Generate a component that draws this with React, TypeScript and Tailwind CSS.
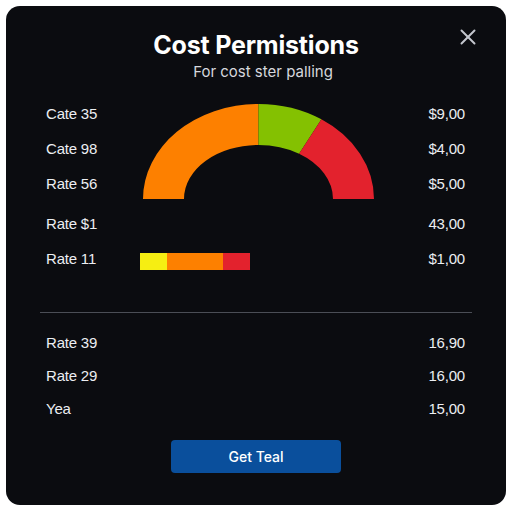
import { X } from "lucide-react";

const topRows = [
  { label: "Cate 35", value: "$9,00" },
  { label: "Cate 98", value: "$4,00" },
  { label: "Rate 56", value: "$5,00" },
  { label: "Rate $1", value: "43,00" },
  { label: "Rate 11", value: "$1,00" },
];

const bottomRows = [
  { label: "Rate 39", value: "16,90" },
  { label: "Rate 29", value: "16,00" },
  { label: "Yea", value: "15,00" },
];

// gauge geometry
const W = 231;
const H = 95;
const cx = W / 2;
const cy = H;
const R = { x: 115.5, y: 95 };
const r = { x: 74.5, y: 54 };

function pt(rad: { x: number; y: number }, deg: number) {
  const a = (deg * Math.PI) / 180;
  return `${(cx + rad.x * Math.cos(a)).toFixed(2)} ${(cy - rad.y * Math.sin(a)).toFixed(2)}`;
}

function segment(a1: number, a2: number) {
  return `M ${pt(R, a1)} A ${R.x} ${R.y} 0 0 1 ${pt(R, a2)} L ${pt(r, a2)} A ${r.x} ${r.y} 0 0 0 ${pt(r, a1)} Z`;
}

function Gauge() {
  return (
    <svg width={W} height={H} viewBox={`0 0 ${W} ${H}`} className="block">
      <path d={segment(180, 90)} fill="#fd8000" />
      <path d={segment(90, 57)} fill="#84c101" />
      <path d={segment(57, 0)} fill="#e3222d" />
    </svg>
  );
}

export default function App() {
  return (
    <div className="min-h-screen bg-white p-[6px] font-['Inter',sans-serif]">
      <div className="relative h-[499px] rounded-[14px] bg-[#0b0c10] text-[#eceef2]">
        <button className="absolute right-[25px] top-[18px] text-[#c4c7ce]">
          <X size={26} strokeWidth={1.8} />
        </button>

        <div className="pt-[24px] text-center">
          <h2 className="text-[25px] leading-[30px] font-bold text-white tracking-[-0.2px]">Cost Permistions</h2>
          <p className="mt-[3px] pl-[14px] text-[15px] leading-[18px] text-[#d6d8dd]">For cost ster palling</p>
        </div>

        <div className="mt-[16px] grid grid-cols-[1fr_231px_1fr] pl-[40px] pr-[41px] font-['Liberation_Sans',sans-serif] text-[15px] tracking-[-0.2px]">
          <div className="flex flex-col">
            {topRows.map((row, i) => (
              <div key={row.label} className={`flex h-[35px] items-center ${i === 3 ? "mt-[5px]" : ""}`}>
                {row.label}
              </div>
            ))}
          </div>

          <div className="flex flex-col pt-[7px] pl-[3px]">
            <Gauge />
            <div className="ml-[-3px] mt-[54px] flex h-[17px] w-[110px]">
              <div className="w-[27px] bg-[#f6ee12]" />
              <div className="w-[56px] bg-[#fd8000]" />
              <div className="w-[27px] bg-[#e3222d]" />
            </div>
          </div>

          <div className="flex flex-col items-end">
            {topRows.map((row, i) => (
              <div key={row.label} className={`flex h-[35px] items-center ${i === 3 ? "mt-[5px]" : ""}`}>
                {row.value}
              </div>
            ))}
          </div>
        </div>

        <div className="mx-[34px] mt-[35px] h-px bg-[#4b4e56]" />

        <div className="mt-[14px] flex flex-col pl-[40px] pr-[41px] font-['Liberation_Sans',sans-serif] text-[15px] tracking-[-0.2px]">
          {bottomRows.map((row) => (
            <div key={row.label} className="flex h-[33px] items-center justify-between">
              <span>{row.label}</span>
              <span>{row.value}</span>
            </div>
          ))}
        </div>

        <div className="mt-[14px] flex justify-center">
          <button className="h-[33px] w-[170px] rounded-[4px] bg-[#0a4f9c] text-[14px] font-medium text-white">
            Get Teal
          </button>
        </div>
      </div>
    </div>
  );
}
